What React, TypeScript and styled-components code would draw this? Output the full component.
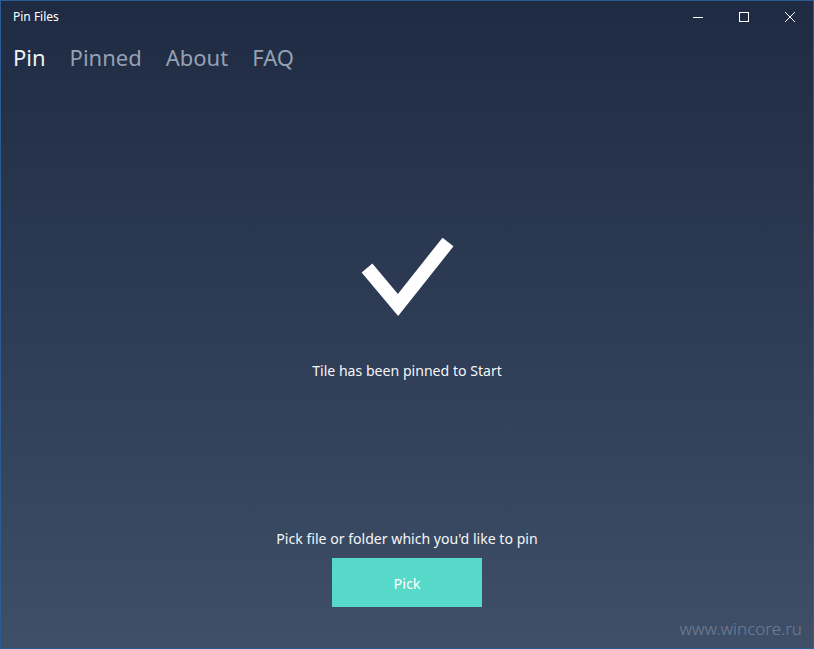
import styled, { createGlobalStyle } from 'styled-components'

const Global = createGlobalStyle`
  html, body {
    margin: 0;
    padding: 0;
    background: #1f2b42;
  }
  * {
    box-sizing: border-box;
  }
`

const Window = styled.div`
  width: 814px;
  height: 649px;
  display: flex;
  flex-direction: column;
  border: 1px solid #2b5d94;
  background: linear-gradient(180deg, #1f2b42 0%, #2c3a53 45%, #3f4f68 100%);
  font-family: 'Noto Sans', 'Open Sans', sans-serif;
  color: #f2f4f7;
  position: relative;
  overflow: hidden;
`

const TitleBar = styled.div`
  height: 31px;
  display: flex;
  align-items: center;
  justify-content: space-between;
`

const Title = styled.div`
  padding-left: 12px;
  font-size: 12px;
  color: #ffffff;
`

const Controls = styled.div`
  display: flex;
  height: 100%;
`

const CtrlButton = styled.div`
  width: 46px;
  height: 100%;
  display: flex;
  align-items: center;
  justify-content: center;
`

const Nav = styled.nav`
  display: flex;
  gap: 24px;
  padding-left: 12px;
  margin-top: 10px;
`

const NavItem = styled.div<{ $active?: boolean }>`
  font-size: 22px;
  font-weight: 400;
  color: ${(p) => (p.$active ? '#eef1f5' : '#95a1b3')};
`

const Main = styled.main`
  flex: 1;
  display: flex;
  flex-direction: column;
  align-items: center;
`

const Check = styled.svg`
  width: 104px;
  height: 90px;
  margin-top: 159px;
`

const Message = styled.div<{ $gap?: number }>`
  margin-top: ${(p) => p.$gap ?? 0}px;
  font-size: 14.1px;
  color: #f4f6f9;
`

const Bottom = styled.div`
  margin-top: auto;
  margin-bottom: 41px;
  display: flex;
  flex-direction: column;
  align-items: center;
`

const PickButton = styled.button`
  margin-top: 10px;
  width: 150px;
  height: 49px;
  border: none;
  background: #56d9c9;
  color: #ffffff;
  font-family: inherit;
  font-size: 14.5px;
  cursor: pointer;
`

const Watermark = styled.div`
  position: absolute;
  right: 11px;
  bottom: 8px;
  font-size: 17px;
  font-weight: 300;
  color: #6f7e94;
`

export default function App() {
  return (
    <>
      <Global />
      <Window>
        <TitleBar>
          <Title>Pin Files</Title>
          <Controls>
            <CtrlButton>
              <svg width="10" height="10" viewBox="0 0 10 10">
                <path d="M0 5.5H10" stroke="#fff" strokeWidth="1" />
              </svg>
            </CtrlButton>
            <CtrlButton>
              <svg width="10" height="10" viewBox="0 0 10 10">
                <rect x="0.5" y="0.5" width="9" height="9" fill="none" stroke="#fff" strokeWidth="1" />
              </svg>
            </CtrlButton>
            <CtrlButton>
              <svg width="10" height="10" viewBox="0 0 10 10">
                <path d="M0 0L10 10M10 0L0 10" stroke="#fff" strokeWidth="1" />
              </svg>
            </CtrlButton>
          </Controls>
        </TitleBar>
        <Nav>
          <NavItem $active>Pin</NavItem>
          <NavItem>Pinned</NavItem>
          <NavItem>About</NavItem>
          <NavItem>FAQ</NavItem>
        </Nav>
        <Main>
          <Check viewBox="0 0 104 90">
            <path
              d="M12 37L43 74L93 11"
              fill="none"
              stroke="#fff"
              strokeWidth="14"
              strokeLinecap="butt"
              strokeLinejoin="miter"
            />
          </Check>
          <Message $gap={40}>Tile has been pinned to Start</Message>
          <Bottom>
            <Message>Pick file or folder which you'd like to pin</Message>
            <PickButton>Pick</PickButton>
          </Bottom>
        </Main>
        <Watermark>www.wincore.ru</Watermark>
      </Window>
    </>
  )
}
